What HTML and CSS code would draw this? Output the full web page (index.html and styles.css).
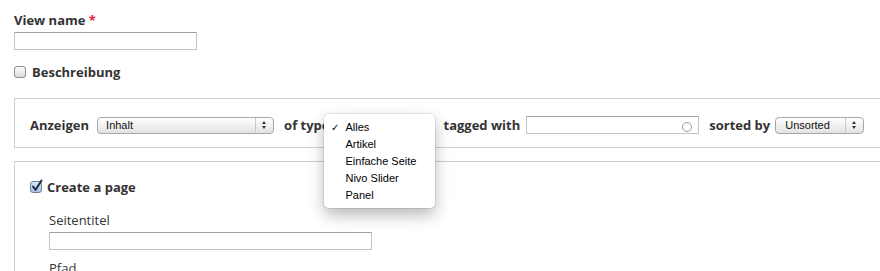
FILE: index.html
```html
<!doctype html>
<html lang="en">
<head>
  <meta charset="utf-8" />
  <link rel="stylesheet" href="styles.css">
</head>
<body>
  <div class="form-item">
    <label class="label">View name <span class="required">*</span></label>
    <div class="text-input name-input"></div>
  </div>

  <div class="check-row">
    <span class="checkbox"></span>
    <span class="label">Beschreibung</span>
  </div>

  <div class="fieldset display-set">
    <div class="wizard-row">
      <span class="label">Anzeigen</span>
      <div class="select select-show"><span class="select-text">Inhalt</span><span class="select-arrows"></span></div>
      <span class="label">of type</span>
      <div class="select-wrap">
        <!-- open select: the popup covers its label -->
        <div class="select select-type"><span class="select-text"></span><span class="select-arrows"></span></div>
        <ul class="popup-menu">
          <li class="selected">Alles</li>
          <li>Artikel</li>
          <li>Einfache Seite</li>
          <li>Nivo Slider</li>
          <li>Panel</li>
        </ul>
      </div>
      <span class="label">tagged with</span>
      <div class="text-input tag-input"><span class="throbber"></span></div>
      <span class="label">sorted by</span>
      <div class="select select-sort"><span class="select-text">Unsorted</span><span class="select-arrows"></span></div>
    </div>
  </div>

  <div class="fieldset page-set">
    <div class="check-row">
      <span class="checkbox checked">
        <svg width="14" height="14" viewBox="0 0 14 14"><path d="M3 7.5 L5.6 10.8 L11.5 1.5" fill="none" stroke="#1f2a44" stroke-width="2" stroke-linecap="round" stroke-linejoin="round"/></svg>
      </span>
      <span class="label">Create a page</span>
    </div>
    <div class="sub-item">
      <div class="plain-label">Seitentitel</div>
      <div class="text-input title-input"></div>
      <div class="plain-label path-label">Pfad</div>
    </div>
  </div>
</body>
</html>
```

FILE: styles.css
```css
body {
  margin: 0;
  padding: 12px 0 0 14px;
  font-family: "Open Sans", "DejaVu Sans", sans-serif;
  font-size: 13px;
  line-height: 16px;
  color: #333;
  background: #fff;
  overflow: hidden;
  height: 271px;
  box-sizing: border-box;
}

.label {
  display: block;
  font-weight: bold;
  white-space: nowrap;
}

.required {
  color: #e3263c;
}

.text-input {
  box-sizing: border-box;
  height: 18px;
  border: 1px solid #c4c4c4;
  border-top-color: #a3a3a3;
  background: #fff;
}

.form-item .text-input {
  margin-top: 4px;
}

.name-input {
  width: 183px;
}

.check-row {
  display: flex;
  align-items: center;
  gap: 6px;
  margin-top: 14px;
}

.checkbox {
  position: relative;
  box-sizing: border-box;
  width: 12px;
  height: 12px;
  border: 1px solid #8c8c8c;
  border-radius: 3px;
  background: linear-gradient(#fdfdfd, #dcdcdc);
  flex: none;
}

.checkbox.checked {
  background: linear-gradient(#dbe6f6, #a9c0e6);
  border-color: #6f7f9c;
}

.checkbox svg {
  position: absolute;
  left: -1px;
  top: -3px;
}

.fieldset {
  border: 1px solid #cfcfcf;
  border-right: none;
}

.display-set {
  margin-top: 18px;
  padding: 18px 0 14px 15px;
}

.wizard-row {
  display: flex;
  align-items: center;
  height: 16px;
}

.select {
  box-sizing: border-box;
  height: 17px;
  border: 1px solid #a8a8a8;
  border-radius: 4px;
  background: linear-gradient(#ffffff, #f1f1f1 50%, #e2e2e2);
  display: flex;
  align-items: stretch;
  font-family: "Liberation Sans", Arial, sans-serif;
  font-size: 11px;
  line-height: 15px;
  color: #111;
}

.select-text {
  flex: 1;
  padding-left: 8px;
}

.select-arrows {
  position: relative;
  width: 17px;
  border-left: 1px solid #c9c9c9;
}

.select-arrows::before,
.select-arrows::after {
  content: "";
  position: absolute;
  left: 6px;
  border-left: 2.5px solid transparent;
  border-right: 2.5px solid transparent;
}

.select-arrows::before {
  top: 3px;
  border-bottom: 3px solid #333;
}

.select-arrows::after {
  top: 8px;
  border-top: 3px solid #333;
}

.select-show {
  width: 177px;
  margin: 0 10px 0 8px;
}

.select-wrap {
  position: relative;
  margin-right: 8px;
}

.select-type {
  width: 106px;
  border-color: #8ea8d4;
}

.select-sort {
  width: 89px;
  margin-left: 5px;
}

.select-sort .select-text {
  padding-left: 9px;
}

.popup-menu {
  position: absolute;
  left: -5px;
  top: -3px;
  width: 111px;
  box-sizing: border-box;
  margin: 0;
  padding: 5px 0 4px;
  list-style: none;
  background: #fff;
  border-radius: 5px;
  box-shadow: 0 0 0 1px rgba(0, 0, 0, 0.08), 0 7px 16px rgba(0, 0, 0, 0.28);
  font-family: "Liberation Sans", Arial, sans-serif;
  font-size: 11px;
  line-height: 17px;
  color: #000;
}

.popup-menu li {
  position: relative;
  padding-left: 21px;
  white-space: nowrap;
}

.popup-menu li.selected::before {
  content: "\2713";
  position: absolute;
  left: 7px;
  font-size: 10px;
}

.tag-input {
  width: 173px;
  margin: 0 10px 0 6px;
  display: flex;
  align-items: center;
  justify-content: flex-end;
  padding-right: 6px;
}

.throbber {
  width: 8px;
  height: 8px;
  margin-top: 4px;
  border: 1.5px solid #9a9a9a;
  border-radius: 50%;
}

.page-set {
  margin-top: 13px;
  padding: 17px 0 0 15px;
  height: 100px;
}

.page-set .check-row {
  margin-top: 0;
  gap: 5px;
}

.sub-item {
  padding-left: 19px;
  margin-top: 17px;
}

.plain-label {
  font-size: 13px;
}

.title-input {
  width: 323px;
  margin-top: 4px;
}

.path-label {
  margin-top: 10px;
}
```
